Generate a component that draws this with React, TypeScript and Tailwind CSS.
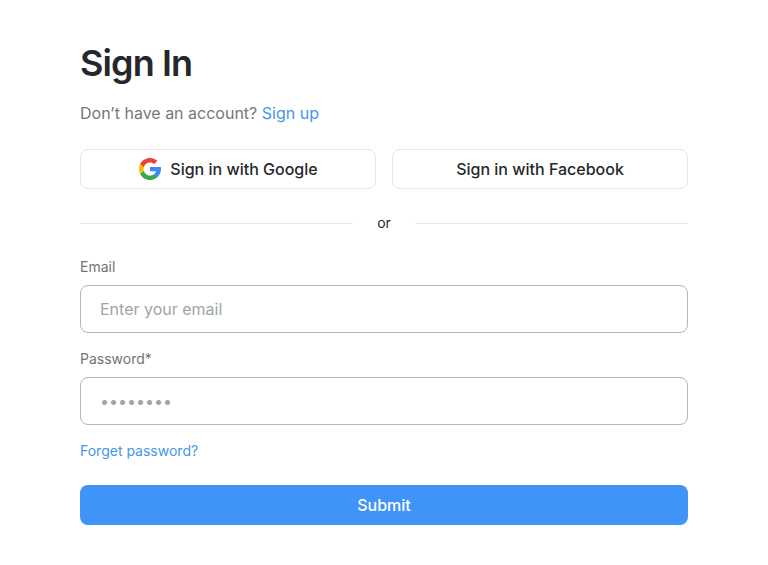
import React from "react";

function GoogleLogo() {
  return (
    <svg className="size-6" viewBox="0 0 24 24" aria-hidden="true">
      <path fill="#4285F4" d="M23 12.25c0-.78-.07-1.53-.2-2.25H12v4.26h5.92c-.26 1.37-1.04 2.53-2.21 3.31v2.77h3.57C21.36 18.42 23 15.6 23 12.25Z" />
      <path fill="#34A853" d="M12 23c2.97 0 5.46-.98 7.28-2.66l-3.57-2.77c-.98.66-2.23 1.06-3.71 1.06-2.86 0-5.29-1.93-6.16-4.53H2.18v2.84C3.99 20.53 7.7 23 12 23Z" />
      <path fill="#FBBC05" d="M5.84 14.09A6.6 6.6 0 0 1 5.49 12c0-.73.13-1.43.35-2.09V7.07H2.18A11 11 0 0 0 1 12c0 1.78.43 3.45 1.18 4.93Z" />
      <path fill="#EA4335" d="M12 5.38c1.62 0 3.06.56 4.21 1.64l3.15-3.15C17.45 2.09 14.97 1 12 1 7.7 1 3.99 3.47 2.18 7.07l3.66 2.84C6.71 7.31 9.14 5.38 12 5.38Z" />
    </svg>
  );
}

const social =
  "flex h-10 flex-1 items-center justify-center gap-2 rounded-lg border border-[#e5e7e9] bg-white text-base font-medium text-[#25282b]";
const field =
  "mt-2 block h-12 w-full rounded-lg border border-[#b4b8bb] bg-white px-[19px] text-base text-[#25282b] placeholder:text-[#a0a4a8] outline-none focus:border-[#4094f7]";

export default function App() {
  return (
    <main className="bg-white px-20 py-10 font-['Inter',sans-serif] text-[#25282b]">
      <h1 className="text-4xl leading-[46px] font-semibold tracking-tight">Sign In</h1>
      <p className="mt-[15px] text-base leading-6 text-[#74787d]">
        Don’t have an account?{" "}
        <a href="#signup" className="text-[#4596ea]">Sign up</a>
      </p>
      <div className="mt-6 flex gap-4">
        <button type="button" className={social}>
          <GoogleLogo />
          Sign in with Google
        </button>
        <button type="button" className={social}>Sign in with Facebook</button>
      </div>
      <div className="mt-6 flex items-center gap-6 text-sm leading-5">
        <span className="h-px flex-1 bg-[#e8e8e8]" />
        or
        <span className="h-px flex-1 bg-[#e8e8e8]" />
      </div>
      <form className="mt-6" onSubmit={(event) => event.preventDefault()}>
        <label htmlFor="email" className="block text-sm leading-5 text-[#6e7479]">Email</label>
        <input id="email" type="email" placeholder="Enter your email" className={field} />
        <label htmlFor="password" className="mt-4 block text-sm leading-5 text-[#6e7479]">Password*</label>
        <input id="password" type="password" placeholder="••••••••" className={field} />
        <a href="#reset" className="mt-4 block w-fit text-sm leading-5 text-[#4596ea]">Forget password?</a>
        <button type="submit" className="mt-6 h-10 w-full rounded-lg bg-[#4094f7] text-base font-medium text-white">
          Submit
        </button>
      </form>
    </main>
  );
}
